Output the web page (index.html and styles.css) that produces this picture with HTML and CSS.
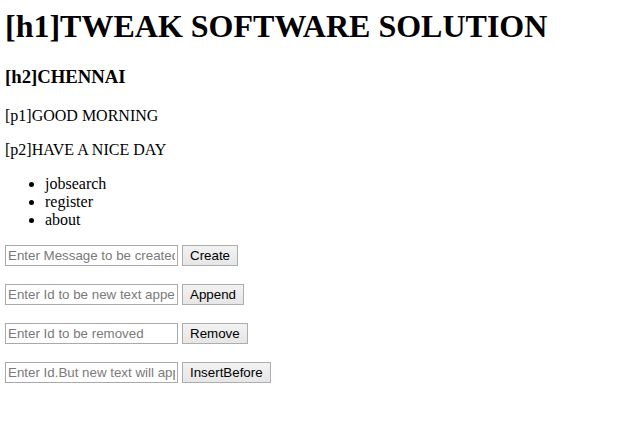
FILE: index.html
```html
<!DOCTYPE html>
<html>
<head>
<meta charset="utf-8">
<title>Tweak</title>
<link rel="stylesheet" href="styles.css">
</head>
<body>
<h1 class="title">[h1]TWEAK SOFTWARE SOLUTION</h1>
<h2 class="city">[h2]CHENNAI</h2>
<p class="para">[p1]GOOD MORNING</p>
<p class="para">[p2]HAVE A NICE DAY</p>
<ul class="menu">
<li>jobsearch</li>
<li>register</li>
<li>about</li>
</ul>
<div class="forms">
<div class="row"><input class="field" type="text" placeholder="Enter Message to be created"><button class="btn">Create</button></div>
<div class="row"><input class="field" type="text" placeholder="Enter Id to be new text appended"><button class="btn">Append</button></div>
<div class="row"><input class="field" type="text" placeholder="Enter Id to be removed"><button class="btn">Remove</button></div>
<div class="row"><input class="field" type="text" placeholder="Enter Id.But new text will appear before"><button class="btn">InsertBefore</button></div>
</div>
</body>
</html>
```
FILE: styles.css
```css
html, body {
  background: #ffffff;
}
body {
  margin: 8px 5px;
  font-family: "Liberation Serif", "Times New Roman", serif;
  color: #000000;
}
.title {
  font-size: 32px;
  font-weight: bold;
  margin: 0 0 21.44px 0;
  line-height: normal;
}
.city {
  font-size: 18.72px;
  font-weight: bold;
  margin: 18.72px 0;
  line-height: normal;
}
.para {
  font-size: 16px;
  margin: 16px 0;
}
.menu {
  font-size: 16px;
  margin: 16px 0;
  padding-left: 40px;
}
.forms {
  display: flex;
  flex-direction: column;
  gap: 18px;
  margin-top: 15px;
}
.row {
  display: flex;
  align-items: flex-start;
  gap: 4px;
}
.field {
  box-sizing: border-box;
  width: 173px;
  height: 21px;
  margin: 0;
  padding: 2px 2px;
  border: 1px solid #a9a9a9;
  border-radius: 0;
  font-family: "Liberation Sans", Arial, sans-serif;
  font-size: 13.33px;
  color: #000;
  background: #fff;
  outline: none;
}
.field::placeholder {
  color: #7a7a7a;
  opacity: 1;
}
.btn {
  box-sizing: border-box;
  height: 21px;
  margin: 0;
  padding: 1px 7px;
  border: 1px solid #adadad;
  border-radius: 0;
  background: linear-gradient(#f2f2f2, #e6e6e6);
  font-family: "Liberation Sans", Arial, sans-serif;
  font-size: 13.33px;
  line-height: 17px;
  color: #000;
}
```
